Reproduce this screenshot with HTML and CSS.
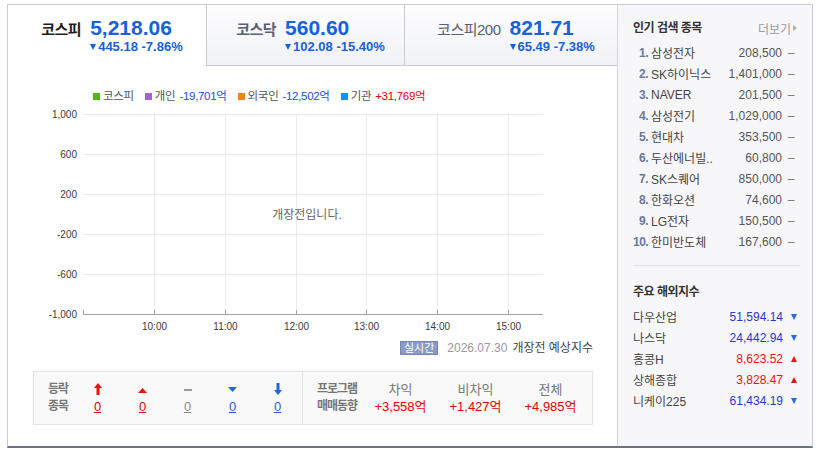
FILE: index.html
```html
<!DOCTYPE html>
<html lang="ko">
<head>
    <meta charset="UTF-8">
    <title>증시 요약</title>
    <link rel="stylesheet" href="styles.css">
</head>
<body>

<div class="stock-widget">
    <div class="main">
        <ul class="tabs">
            <li class="tab on">
                <span class="tab-name">코스피</span>
                <div class="tab-val">
                    <strong class="idx">5,218.06</strong>
                    <span class="chg"><i class="tri-down"></i>445.18 -7.86%</span>
                </div>
            </li>
            <li class="tab">
                <span class="tab-name">코스닥</span>
                <div class="tab-val">
                    <strong class="idx">560.60</strong>
                    <span class="chg"><i class="tri-down"></i>102.08 -15.40%</span>
                </div>
            </li>
            <li class="tab">
                <span class="tab-name light">코스피200</span>
                <div class="tab-val">
                    <strong class="idx">821.71</strong>
                    <span class="chg"><i class="tri-down"></i>65.49 -7.38%</span>
                </div>
            </li>
        </ul>

        <ul class="legend">
            <li><i class="sq green"></i>코스피</li>
            <li><i class="sq purple"></i>개인 <span class="minus">-19,701억</span></li>
            <li><i class="sq orange"></i>외국인 <span class="minus">-12,502억</span></li>
            <li><i class="sq blue"></i>기관 <span class="plus">+31,769억</span></li>
        </ul>

        <svg class="chart" width="560" height="232" viewBox="0 0 560 232">
            <g stroke="#ebebeb" stroke-width="1">
                <line x1="48" y1="10.5" x2="508" y2="10.5"/>
                <line x1="48" y1="50.5" x2="508" y2="50.5"/>
                <line x1="48" y1="90.5" x2="508" y2="90.5"/>
                <line x1="48" y1="130.5" x2="508" y2="130.5"/>
                <line x1="48" y1="170.5" x2="508" y2="170.5"/>
                <line x1="119.5" y1="10" x2="119.5" y2="210"/>
                <line x1="190.5" y1="10" x2="190.5" y2="210"/>
                <line x1="261.5" y1="10" x2="261.5" y2="210"/>
                <line x1="331.5" y1="10" x2="331.5" y2="210"/>
                <line x1="402.5" y1="10" x2="402.5" y2="210"/>
                <line x1="473.5" y1="10" x2="473.5" y2="210"/>
            </g>
            <g stroke="#a3a3a3" stroke-width="1">
                <line x1="48" y1="210.5" x2="508" y2="210.5"/>
                <line x1="48.5" y1="206" x2="48.5" y2="211"/>
                <line x1="119.5" y1="206" x2="119.5" y2="211"/>
                <line x1="190.5" y1="206" x2="190.5" y2="211"/>
                <line x1="261.5" y1="206" x2="261.5" y2="211"/>
                <line x1="331.5" y1="206" x2="331.5" y2="211"/>
                <line x1="402.5" y1="206" x2="402.5" y2="211"/>
                <line x1="473.5" y1="206" x2="473.5" y2="211"/>
            </g>
            <g class="axis-y" text-anchor="end">
                <text x="42" y="14">1,000</text>
                <text x="42" y="54">600</text>
                <text x="42" y="94">200</text>
                <text x="42" y="134">-200</text>
                <text x="42" y="174">-600</text>
                <text x="42" y="214">-1,000</text>
            </g>
            <g class="axis-x" text-anchor="middle">
                <text x="119.5" y="226">10:00</text>
                <text x="190.5" y="226">11:00</text>
                <text x="261.5" y="226">12:00</text>
                <text x="331.5" y="226">13:00</text>
                <text x="402.5" y="226">14:00</text>
                <text x="473.5" y="226">15:00</text>
            </g>
            <text class="empty-msg" x="272" y="115" text-anchor="middle">개장전입니다.</text>
        </svg>

        <p class="chart-info">
            <span class="badge">실시간</span>
            <span class="date">2026.07.30</span>
            <span>개장전 예상지수</span>
        </p>

        <div class="trade-box">
            <div class="updown">
                <div class="box-label">등락<br>종목</div>
                <div class="ud-item">
                    <svg width="8" height="12" viewBox="0 0 8 12"><path d="M4 0 L8 5 H5.5 V12 H2.5 V5 H0 Z" fill="#e8140e"/></svg>
                    <a class="cnt red">0</a>
                </div>
                <div class="ud-item">
                    <svg width="9" height="12" viewBox="0 0 9 12"><path d="M4.5 5 L9 10 H0 Z" fill="#e8140e"/></svg>
                    <a class="cnt red">0</a>
                </div>
                <div class="ud-item">
                    <svg width="8" height="12" viewBox="0 0 8 12"><rect x="0" y="6" width="8" height="2" fill="#999"/></svg>
                    <a class="cnt gray">0</a>
                </div>
                <div class="ud-item">
                    <svg width="9" height="12" viewBox="0 0 9 12"><path d="M0 4 H9 L4.5 9 Z" fill="#2464e0"/></svg>
                    <a class="cnt blue">0</a>
                </div>
                <div class="ud-item">
                    <svg width="8" height="12" viewBox="0 0 8 12"><path d="M2.5 0 H5.5 V7 H8 L4 12 L0 7 H2.5 Z" fill="#2464e0"/></svg>
                    <a class="cnt blue">0</a>
                </div>
            </div>
            <div class="program">
                <div class="box-label">프로그램<br>매매동향</div>
                <div class="pg-item"><span class="pg-head">차익</span><span class="pg-val">+3,558억</span></div>
                <div class="pg-item"><span class="pg-head">비차익</span><span class="pg-val">+1,427억</span></div>
                <div class="pg-item"><span class="pg-head">전체</span><span class="pg-val">+4,985억</span></div>
            </div>
        </div>
    </div>

    <div class="aside">
        <div class="aside-head">
            <h3>인기 검색 종목</h3>
            <a class="more">더보기<i class="tri-right"></i></a>
        </div>
        <ol class="rank-list">
            <li><em>1.</em><span class="name">삼성전자</span><span class="price">208,500</span><span class="flat">–</span></li>
            <li><em>2.</em><span class="name">SK하이닉스</span><span class="price">1,401,000</span><span class="flat">–</span></li>
            <li><em>3.</em><span class="name">NAVER</span><span class="price">201,500</span><span class="flat">–</span></li>
            <li><em>4.</em><span class="name">삼성전기</span><span class="price">1,029,000</span><span class="flat">–</span></li>
            <li><em>5.</em><span class="name">현대차</span><span class="price">353,500</span><span class="flat">–</span></li>
            <li><em>6.</em><span class="name">두산에너빌..</span><span class="price">60,800</span><span class="flat">–</span></li>
            <li><em>7.</em><span class="name">SK스퀘어</span><span class="price">850,000</span><span class="flat">–</span></li>
            <li><em>8.</em><span class="name">한화오션</span><span class="price">74,600</span><span class="flat">–</span></li>
            <li><em>9.</em><span class="name">LG전자</span><span class="price">150,500</span><span class="flat">–</span></li>
            <li><em>10.</em><span class="name">한미반도체</span><span class="price">167,600</span><span class="flat">–</span></li>
        </ol>

        <h3 class="world-title">주요 해외지수</h3>
        <ul class="world-list">
            <li><span class="name">다우산업</span><span class="val down">51,594.14</span><i class="mark"><b class="tri-down"></b></i></li>
            <li><span class="name">나스닥</span><span class="val down">24,442.94</span><i class="mark"><b class="tri-down"></b></i></li>
            <li><span class="name">홍콩H</span><span class="val up">8,623.52</span><i class="mark"><b class="tri-up"></b></i></li>
            <li><span class="name">상해종합</span><span class="val up">3,828.47</span><i class="mark"><b class="tri-up"></b></i></li>
            <li><span class="name">니케이225</span><span class="val down">61,434.19</span><i class="mark"><b class="tri-down"></b></i></li>
        </ul>
    </div>
</div>

</body>
</html>
```

FILE: styles.css
```css
* {
    box-sizing: border-box;
}

body {
    margin: 0;
    font-family: "Liberation Sans", "Noto Sans CJK KR", sans-serif;
    font-size: 12px;
    color: #333;
    background: #fff;
}

ul, ol {
    list-style: none;
    margin: 0;
    padding: 0;
}

h3 {
    margin: 0;
}

.stock-widget {
    display: flex;
    width: 806px;
    height: 444px;
    margin: 4px 0 0 7px;
    border: 1px solid #c8cbd3;
    border-bottom: 2px solid #6d7283;
}

.main {
    width: 609px;
    display: flex;
    flex-direction: column;
}

/* tabs */
.tabs {
    display: flex;
    height: 61px;
}

.tab {
    display: flex;
    justify-content: center;
    align-items: baseline;
    padding: 11px 0 0 10px;
    width: 198px;
    background: linear-gradient(#fdfdfe, #f1f2f6);
    border-left: 1px solid #c8cbd3;
    border-bottom: 1px solid #c8cbd3;
}

.tab.on {
    background: #fff;
    border-left: none;
    border-bottom: none;
}

.tab:last-child {
    width: 213px;
}

.tab-name {
    font-size: 15px;
    font-weight: bold;
    letter-spacing: -0.5px;
    line-height: 24px;
    color: #5a6073;
    margin-right: 9px;
}

.tab.on .tab-name {
    color: #1e1e1e;
}

.tab-name.light {
    font-weight: normal;
}

.tab-val {
    display: flex;
    flex-direction: column;
}

.idx {
    font-size: 21px;
    line-height: 24px;
    color: #1761de;
}

.chg {
    display: flex;
    align-items: center;
    font-size: 13px;
    font-weight: bold;
    line-height: 14px;
    color: #1761de;
}

.tri-down {
    display: inline-block;
    width: 0;
    height: 0;
    border-left: 3.5px solid transparent;
    border-right: 3.5px solid transparent;
    border-top: 6px solid #1761de;
    margin-right: 2px;
}

.tri-up {
    display: inline-block;
    width: 0;
    height: 0;
    border-left: 3.5px solid transparent;
    border-right: 3.5px solid transparent;
    border-bottom: 6px solid #ee1111;
}

/* legend */
.legend {
    display: flex;
    gap: 11px;
    margin: 23px 0 0 85px;
    height: 14px;
    font-size: 11.5px;
    line-height: 14px;
    color: #555;
}

.legend li {
    display: flex;
    align-items: center;
    letter-spacing: -0.3px;
}

.sq {
    width: 7px;
    height: 7px;
    margin-right: 3px;
}

.sq.green { background: #52b814; }
.sq.purple { background: #a064d2; }
.sq.orange { background: #f08418; }
.sq.blue { background: #1d8fe8; }

.minus {
    color: #1a4fd8;
    margin-left: 4px;
}

.plus {
    color: #e80000;
    margin-left: 4px;
}

/* chart */
.chart {
    display: block;
    margin: 1px 0 0 27px;
}

.axis-y text,
.axis-x text {
    font-family: "Liberation Sans", sans-serif;
    font-size: 10px;
    fill: #3a3a3a;
}

.empty-msg {
    font-family: "Liberation Sans", "Noto Sans CJK KR", sans-serif;
    font-size: 12px;
    fill: #666;
}

.chart-info {
    display: flex;
    justify-content: flex-end;
    align-items: center;
    gap: 5px;
    margin: 4px 24px 0 0;
    height: 16px;
    line-height: 16px;
    color: #444;
}

.badge {
    background: #8a9ac5;
    border: 1px solid #7687b7;
    color: #fff;
    font-size: 11px;
    line-height: 12px;
    padding: 0 3px;
    margin-right: 4px;
}

.date {
    color: #9a9a9a;
}

/* bottom box */
.trade-box {
    display: flex;
    height: 54px;
    margin: 15px 24px 0 25px;
    background: #f9f9f9;
    border: 1px solid #e3e3e3;
}

.updown {
    display: flex;
    width: 269px;
    padding: 9px 0 0 14px;
    border-right: 1px solid #e3e3e3;
}

.box-label {
    font-weight: bold;
    color: #777;
    line-height: 17px;
    letter-spacing: -1px;
}

.updown .box-label {
    width: 27px;
}

.ud-item {
    width: 45px;
    display: flex;
    flex-direction: column;
    align-items: center;
}

.ud-item svg {
    display: block;
    margin-top: 2px;
    height: 12px;
}

.cnt {
    margin-top: 3px;
    font-size: 13px;
    line-height: 17px;
    text-decoration: underline;
}

.cnt.red { color: #e50000; }
.cnt.gray { color: #888; }
.cnt.blue { color: #1f5ddd; }

.program {
    display: flex;
    padding: 9px 0 0 14px;
}

.program .box-label {
    width: 46px;
}

.pg-item {
    width: 75px;
    display: flex;
    flex-direction: column;
    align-items: center;
    line-height: 17px;
}

.pg-head {
    color: #777;
    font-size: 13px;
}

.pg-val {
    color: #e80000;
    font-size: 13px;
}

/* right side */
.aside {
    flex: 1;
    background: #f7f7f9;
    border-left: 1px solid #d3d5dc;
    padding: 16px 12px 0 15px;
}

.aside-head {
    display: flex;
    justify-content: space-between;
    align-items: center;
    height: 14px;
    margin-bottom: 7px;
}

.aside h3 {
    font-size: 12px;
    line-height: 14px;
    letter-spacing: -0.5px;
    color: #333;
}

.more {
    display: flex;
    align-items: center;
    color: #9a9a9a;
    font-size: 12px;
    padding-right: 3px;
}

.tri-right {
    display: inline-block;
    width: 0;
    height: 0;
    border-top: 3px solid transparent;
    border-bottom: 3px solid transparent;
    border-left: 4px solid #b0b0b0;
    margin-left: 2px;
}

.rank-list {
    border-bottom: 1px solid #e1e2e6;
    padding-bottom: 13px;
}

.rank-list li,
.world-list li {
    display: flex;
    align-items: center;
    height: 21px;
}

.rank-list em {
    width: 15px;
    text-align: right;
    font-style: normal;
    font-weight: bold;
    color: #6a77a0;
    letter-spacing: -0.5px;
}

.rank-list .name {
    flex: 1;
    margin-left: 3px;
    color: #444;
}

.price {
    color: #555;
}

.flat {
    width: 18px;
    text-align: center;
    color: #777;
}

.world-title {
    margin: 19px 0 7px 0;
}

.world-list .name {
    flex: 1;
    color: #444;
}

.val.down { color: #2337d6; }
.val.up { color: #ee1111; }

.mark {
    width: 17px;
    padding-right: 3px;
    display: flex;
    justify-content: flex-end;
}

.mark .tri-down {
    margin: 0;
    border-top-color: #2a68e6;
}
```
